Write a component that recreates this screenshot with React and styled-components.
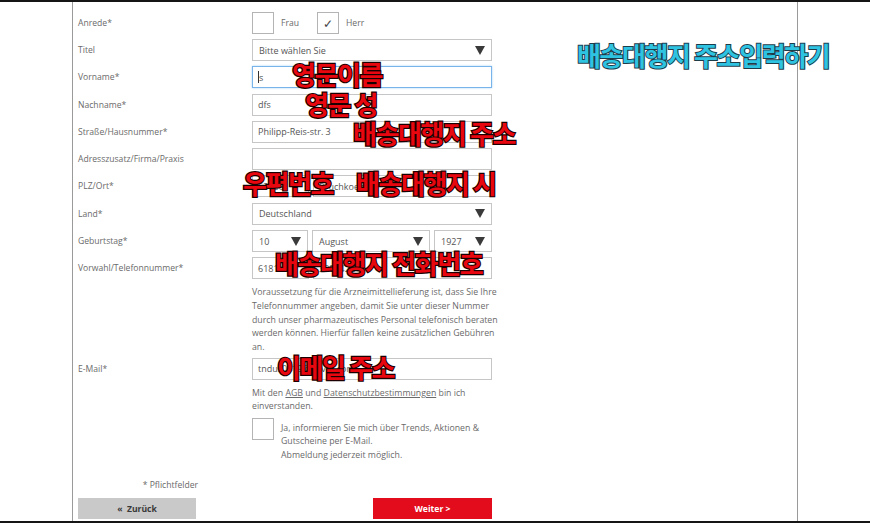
import styled, { createGlobalStyle } from 'styled-components';

const GlobalStyle = createGlobalStyle`
    body {
        margin: 0;
        background: #fff;
        font-family: "Open Sans", "Liberation Sans", sans-serif;
    }
`;

const Page = styled.div`
    position: relative;
    height: 523px;
    box-sizing: border-box;
    border-top: 2px solid #151515;
    border-bottom: 2px solid #151515;
    overflow: hidden;
`;

const Column = styled.div`
    margin-left: 72px;
    width: 726px;
    height: 100%;
    box-sizing: border-box;
    border-left: 1px solid #9a9a9a;
    border-right: 1px solid #9a9a9a;
    padding: 10px 0 0 5px;
`;

const Row = styled.div`
    display: grid;
    grid-template-columns: 174px 240px;
    align-items: ${(p) => (p.$top ? 'start' : 'center')};
    margin-bottom: ${(p) => p.$gap ?? 5.3}px;
`;

const Label = styled.div`
    font-size: 8.6px;
    color: #6a6a6a;
`;

const Field = styled.div`
    height: 22px;
    box-sizing: border-box;
    border: 1px solid ${(p) => (p.$focus ? '#78b4ea' : '#c6c6c6')};
    box-shadow: ${(p) => (p.$focus ? '0 0 2px #a8d2f8' : 'none')};
    background: #fff;
    display: flex;
    align-items: center;
    padding: 0 5px;
    font-size: 9px;
    color: #555;
    white-space: nowrap;
    overflow: hidden;
`;

const Caret = styled.span`
    display: inline-block;
    width: 1px;
    height: 12px;
    background: #333;
`;

const Select = styled(Field)`
    justify-content: space-between;
    padding: 0 6px;
    &::after {
        content: '';
        border-left: 5.5px solid transparent;
        border-right: 5.5px solid transparent;
        border-top: 9px solid #3a3a3a;
    }
`;

const Split = styled.div`
    display: grid;
    grid-template-columns: ${(p) => p.$cols};
    gap: 4px;
`;

const Checks = styled.div`
    display: flex;
    align-items: center;
`;

const Box = styled.div`
    width: 22px;
    height: 22px;
    box-sizing: border-box;
    border: 1px solid #b4b4b4;
    display: flex;
    align-items: center;
    justify-content: center;
    font-size: 12px;
    color: #444;
    flex-shrink: 0;
`;

const CheckText = styled.span`
    font-size: 8.6px;
    color: #6a6a6a;
    margin: 0 18px 0 7px;
`;

const Help = styled.div`
    font-size: 8.75px;
    line-height: ${(p) => p.$lh ?? 13.7}px;
    color: #6a6a6a;
    white-space: nowrap;
    margin-top: ${(p) => p.$mt ?? 0}px;
`;

const Link = styled.span`
    text-decoration: underline;
`;

const Opt = styled.div`
    display: flex;
    gap: 7px;
`;

const OptText = styled(Help)`
    padding-top: 4px;
`;

const Footer = styled.div`
    margin-top: 17px;
    width: 414px;
`;

const Required = styled.div`
    width: 120px;
    text-align: right;
    font-size: 8.6px;
    color: #6a6a6a;
    margin-bottom: 7px;
`;

const Buttons = styled.div`
    display: flex;
    justify-content: space-between;
`;

const Button = styled.div`
    width: ${(p) => p.$w}px;
    height: 21px;
    display: flex;
    align-items: center;
    justify-content: center;
    font-size: 8.6px;
    font-weight: 700;
    color: ${(p) => (p.$primary ? '#fff' : '#3a3a3a')};
    background: ${(p) => (p.$primary ? '#e20c1c' : '#c9c9c9')};
`;

const Note = styled.div`
    position: absolute;
    left: ${(p) => p.$x}px;
    top: ${(p) => p.$y}px;
    font-family: "Noto Sans CJK KR", sans-serif;
    font-weight: 700;
    font-size: 26px;
    line-height: 1;
    letter-spacing: -1.4px;
    white-space: nowrap;
    color: ${(p) => (p.$blue ? '#2fc3e2' : '#e8060f')};
    -webkit-text-stroke: ${(p) => (p.$blue ? '2px #1c3c4a' : '2.4px #1a0000')};
    paint-order: stroke fill;
`;

const rows = [
    ['Vorname*', <Field $focus><Caret />s</Field>],
    ['Nachname*', <Field>dfs</Field>],
    ['Straße/Hausnummer*', <Field>Philipp-Reis-str. 3</Field>],
    ['Adresszusatz/Firma/Praxis', <Field />],
    ['PLZ/Ort*', <Split $cols="57px 179px"><Field>63486</Field><Field>Bruchkoebel</Field></Split>],
    ['Land*', <Select>Deutschland</Select>],
    ['Geburtstag*', <Split $cols="56px 118px 58px"><Select>10</Select><Select>August</Select><Select>1927</Select></Split>],
];

export default function App() {
    return (
        <>
            <GlobalStyle />
            <Page>
                <Column>
                    <Row>
                        <Label>Anrede*</Label>
                        <Checks>
                            <Box />
                            <CheckText>Frau</CheckText>
                            <Box>✓</Box>
                            <CheckText>Herr</CheckText>
                        </Checks>
                    </Row>
                    <Row $gap={5}>
                        <Label>Titel</Label>
                        <Select>Bitte wählen Sie</Select>
                    </Row>
                    {rows.map(([label, field]) => (
                        <Row key={label}>
                            <Label>{label}</Label>
                            {field}
                        </Row>
                    ))}
                    <Row $gap={5}>
                        <Label>Vorwahl/Telefonnummer*</Label>
                        <Split $cols="57px 179px"><Field>6181</Field><Field>3094422</Field></Split>
                    </Row>
                    <Row $gap={3}>
                        <div />
                        <Help $mt={2}>
                            Voraussetzung für die Arzneimittellieferung ist, dass Sie Ihre<br />
                            Telefonnummer angeben, damit Sie unter dieser Nummer<br />
                            durch unser pharmazeutisches Personal telefonisch beraten<br />
                            werden können. Hierfür fallen keine zusätzlichen Gebühren<br />
                            an.
                        </Help>
                    </Row>
                    <Row $gap={7}>
                        <Label>E-Mail*</Label>
                        <Field>tndus0419@naver.com</Field>
                    </Row>
                    <Row $gap={5}>
                        <div />
                        <Help $lh={13}>
                            Mit den <Link>AGB</Link> und <Link>Datenschutzbestimmungen</Link> bin ich<br />
                            einverstanden.
                        </Help>
                    </Row>
                    <Row $gap={0} $top>
                        <div />
                        <Opt>
                            <Box />
                            <OptText $lh={13.5}>
                                Ja, informieren Sie mich über Trends, Aktionen &amp;<br />
                                Gutscheine per E-Mail.<br />
                                Abmeldung jederzeit möglich.
                            </OptText>
                        </Opt>
                    </Row>
                    <Footer>
                        <Required>* Pflichtfelder</Required>
                        <Buttons>
                            <Button $w={118}>«&nbsp; Zurück</Button>
                            <Button $w={119} $primary>Weiter &gt;</Button>
                        </Buttons>
                    </Footer>
                </Column>
                <Note $x={292} $y={59}>영문이름</Note>
                <Note $x={305} $y={89}>영문 성</Note>
                <Note $x={353} $y={118}>배송대행지 주소</Note>
                <Note $x={243} $y={168}>우편번호</Note>
                <Note $x={356} $y={168}>배송대행지 시</Note>
                <Note $x={275} $y={248}>배송대행지 전화번호</Note>
                <Note $x={277} $y={352}>이메일 주소</Note>
                <Note $x={577} $y={40} $blue>배송대행지 주소입력하기</Note>
            </Page>
        </>
    );
}
